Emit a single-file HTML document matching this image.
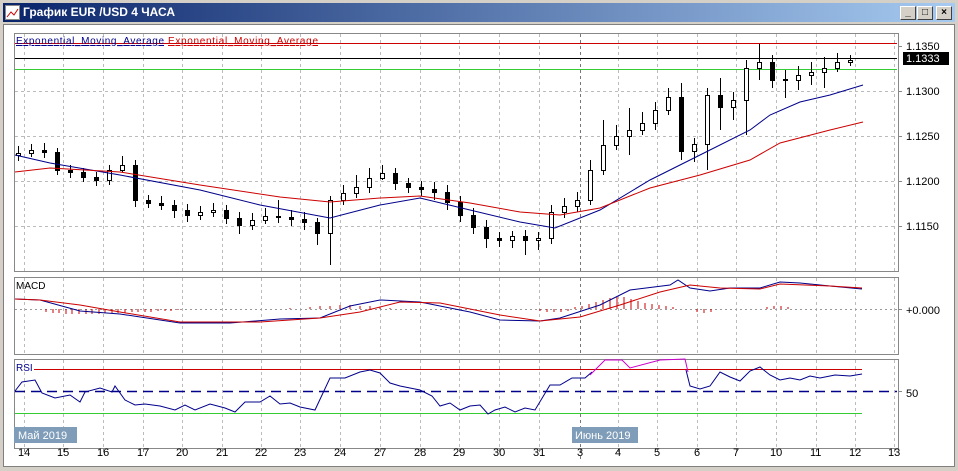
<!DOCTYPE html>
<html><head><meta charset="utf-8"><style>
body{margin:0;width:958px;height:471px;overflow:hidden;background:#d4d0c8;font-family:"Liberation Sans","DejaVu Sans",sans-serif}
#t{position:absolute;left:3px;top:3px;width:952px;height:19px;background:linear-gradient(90deg,#0a246a,#a6caf0)}
#t span{position:absolute;left:20px;top:2px;color:#fff;font:bold 12px "Liberation Sans",sans-serif}
.b{position:absolute;top:3px;width:14px;height:12px;background:#d4d0c8;border:1px solid;border-color:#fff #404040 #404040 #fff;font:bold 10px sans-serif;text-align:center;line-height:12px;color:#000}
#c{position:absolute;left:3px;top:24px;width:950px;height:441px;background:#fff;border:1px solid #808080}
svg{position:absolute;left:0;top:0}
</style></head><body>
<div id="t"><svg width="16" height="16" style="left:2px;top:2px"><rect x="0.5" y="0.5" width="14" height="14" fill="#fff" stroke="#888"/><polyline points="2,12 6,7 9,10 13,4" fill="none" stroke="#c00"/></svg><span>График EUR /USD  4 ЧАСА</span>
<div class="b" style="left:897px">_</div><div class="b" style="left:914px">□</div><div class="b" style="left:933px">×</div></div>
<div id="c"></div>
<svg width="958" height="471" font-family="Liberation Sans, DejaVu Sans, sans-serif" font-size="11">
<g fill="#fff" stroke="#888">
<rect x="14.5" y="33.5" width="884" height="238"/>
<rect x="14.5" y="277.5" width="884" height="77"/>
<rect x="14.5" y="359.5" width="884" height="89"/>
</g>
<g stroke="#bbb" stroke-dasharray="3,3">
<path d="M24.5 34V271M63.5 34V271M103.5 34V271M143.5 34V271M182.5 34V271M222.5 34V271M261.5 34V271M300.5 34V271M340.5 34V271M380.5 34V271M420.5 34V271M459.5 34V271M499.5 34V271M539.5 34V271M618.5 34V271M657.5 34V271M697.5 34V271M736.5 34V271M776.5 34V271M816.5 34V271M855.5 34V271M894.5 34V271"/>
<path d="M24.5 278V354M63.5 278V354M103.5 278V354M143.5 278V354M182.5 278V354M222.5 278V354M261.5 278V354M300.5 278V354M340.5 278V354M380.5 278V354M420.5 278V354M459.5 278V354M499.5 278V354M539.5 278V354M618.5 278V354M657.5 278V354M697.5 278V354M736.5 278V354M776.5 278V354M816.5 278V354M855.5 278V354M894.5 278V354"/>
<path d="M24.5 360V448M63.5 360V448M103.5 360V448M143.5 360V448M182.5 360V448M222.5 360V448M261.5 360V448M300.5 360V448M340.5 360V448M380.5 360V448M420.5 360V448M459.5 360V448M499.5 360V448M539.5 360V448M618.5 360V448M657.5 360V448M697.5 360V448M736.5 360V448M776.5 360V448M816.5 360V448M855.5 360V448M894.5 360V448"/>
<path d="M15 91.5H897M15 136.5H897M15 181.5H897M15 226.5H897"/>
</g>
<path d="M580.5 34V271M580.5 278V354M580.5 360V460" stroke="#777" stroke-dasharray="3,3"/>
<path d="M898 46.5h4M898 91.5h4M898 136.5h4M898 181.5h4M898 226.5h4M898 309.5h4M898 391.5h4M24.5 448v4M63.5 448v4M103.5 448v4M143.5 448v4M182.5 448v4M222.5 448v4M261.5 448v4M300.5 448v4M340.5 448v4M380.5 448v4M420.5 448v4M459.5 448v4M499.5 448v4M539.5 448v4M580.5 448v4M618.5 448v4M657.5 448v4M697.5 448v4M736.5 448v4M776.5 448v4M816.5 448v4M855.5 448v4M894.5 448v4" stroke="#888"/>
<g fill="#000">
<text x="906" y="50">1.1350</text><text x="906" y="95">1.1300</text><text x="906" y="140">1.1250</text><text x="906" y="185">1.1200</text><text x="906" y="230">1.1150</text>
<text x="906" y="314">+0.000</text><text x="906" y="397">50</text>
<text x="18" y="456">14</text><text x="57" y="456">15</text><text x="97" y="456">16</text><text x="137" y="456">17</text><text x="176" y="456">20</text><text x="216" y="456">21</text><text x="255" y="456">22</text><text x="294" y="456">23</text><text x="334" y="456">24</text><text x="374" y="456">27</text><text x="414" y="456">28</text><text x="453" y="456">29</text><text x="493" y="456">30</text><text x="533" y="456">31</text><text x="577" y="456">3</text><text x="615" y="456">4</text><text x="654" y="456">5</text><text x="694" y="456">6</text><text x="733" y="456">7</text><text x="770" y="456">10</text><text x="810" y="456">11</text><text x="849" y="456">12</text><text x="888" y="456">13</text>
</g>
<path d="M15 43.5H897" stroke="#c00"/><path d="M15 58.5H897" stroke="#000"/><path d="M15 69.5H897" stroke="#3c3"/>
<rect x="903" y="52" width="46" height="13" fill="#000"/><text x="906" y="62" fill="#fff">1.1333</text>
<text x="16" y="44" fill="#00008b" font-size="10" textLength="148" text-decoration="underline">Exponential_Moving_Average</text>
<text x="168" y="44" fill="#c00" font-size="10" textLength="150" text-decoration="underline">Exponential_Moving_Average</text>
<path stroke="#000" d="M18.5 146V161M31.5 144V157M44.5 143V158M57.5 148V175M70.5 165V178M83.5 168V182M96.5 172V186M109.5 165V185M122.5 156V172M135.5 160V207M148.5 195V208M161.5 196V210M174.5 200V218M187.5 204V222M200.5 206V220M213.5 203V217M226.5 205V224M239.5 212V234M252.5 213V230M265.5 208V224M278.5 200V223M291.5 210V226M304.5 212V230M317.5 218V245M330.5 196V265M343.5 185V205M356.5 175V198M369.5 168V193M382.5 165V180M395.5 168V190M408.5 178V193M421.5 181V196M434.5 182V200M447.5 185V210M460.5 196V222M473.5 208V234M486.5 220V248M499.5 232V247M512.5 231V248M525.5 230V255M538.5 232V250M551.5 205V244M564.5 198V218M577.5 192V212M590.5 160V205M603.5 120V175M616.5 125V150M629.5 108V155M642.5 112V135M655.5 102V130M668.5 88V115M681.5 83V160M694.5 138V162M707.5 88V170M720.5 78V130M733.5 92V120M746.5 60V135M759.5 44V80M772.5 55V88M785.5 70V98M798.5 66V90M811.5 62V85M824.5 57V88M837.5 53V72M850.5 55V66"/>
<g stroke="#000">
<rect x="16.5" y="153.5" width="4" height="2" fill="#fff"/><rect x="29.5" y="150.5" width="4" height="3" fill="#fff"/><rect x="42.5" y="150.5" width="4" height="2"/><rect x="55.5" y="152.5" width="4" height="18"/><rect x="68.5" y="170.5" width="4" height="2"/><rect x="81.5" y="172.5" width="4" height="5"/><rect x="94.5" y="177.5" width="4" height="3"/><rect x="107.5" y="170.5" width="4" height="10" fill="#fff"/><rect x="120.5" y="165.5" width="4" height="5" fill="#fff"/><rect x="133.5" y="165.5" width="4" height="35"/><rect x="146.5" y="200.5" width="4" height="3"/><rect x="159.5" y="203.5" width="4" height="2"/><rect x="172.5" y="205.5" width="4" height="5"/><rect x="185.5" y="210.5" width="4" height="5"/><rect x="198.5" y="212.5" width="4" height="3" fill="#fff"/><rect x="211.5" y="210.5" width="4" height="2" fill="#fff"/><rect x="224.5" y="210.5" width="4" height="8"/><rect x="237.5" y="218.5" width="4" height="7"/><rect x="250.5" y="220.5" width="4" height="5" fill="#fff"/><rect x="263.5" y="216.5" width="4" height="4" fill="#fff"/><rect x="276.5" y="216.5" width="4" height="1"/><rect x="289.5" y="217.5" width="4" height="2"/><rect x="302.5" y="219.5" width="4" height="3"/><rect x="315.5" y="222.5" width="4" height="11"/><rect x="328.5" y="200.5" width="4" height="33" fill="#fff"/><rect x="341.5" y="193.5" width="4" height="7" fill="#fff"/><rect x="354.5" y="187.5" width="4" height="6" fill="#fff"/><rect x="367.5" y="178.5" width="4" height="9" fill="#fff"/><rect x="380.5" y="173.5" width="4" height="5" fill="#fff"/><rect x="393.5" y="173.5" width="4" height="10"/><rect x="406.5" y="183.5" width="4" height="4"/><rect x="419.5" y="187.5" width="4" height="2"/><rect x="432.5" y="189.5" width="4" height="3"/><rect x="445.5" y="192.5" width="4" height="10"/><rect x="458.5" y="202.5" width="4" height="13"/><rect x="471.5" y="215.5" width="4" height="12"/><rect x="484.5" y="227.5" width="4" height="11"/><rect x="497.5" y="238.5" width="4" height="2"/><rect x="510.5" y="236.5" width="4" height="4" fill="#fff"/><rect x="523.5" y="236.5" width="4" height="4"/><rect x="536.5" y="238.5" width="4" height="2" fill="#fff"/><rect x="549.5" y="212.5" width="4" height="26" fill="#fff"/><rect x="562.5" y="206.5" width="4" height="6" fill="#fff"/><rect x="575.5" y="200.5" width="4" height="6" fill="#fff"/><rect x="588.5" y="170.5" width="4" height="30" fill="#fff"/><rect x="601.5" y="145.5" width="4" height="25" fill="#fff"/><rect x="614.5" y="136.5" width="4" height="9" fill="#fff"/><rect x="627.5" y="130.5" width="4" height="6" fill="#fff"/><rect x="640.5" y="123.5" width="4" height="7" fill="#fff"/><rect x="653.5" y="110.5" width="4" height="13" fill="#fff"/><rect x="666.5" y="97.5" width="4" height="13" fill="#fff"/><rect x="679.5" y="97.5" width="4" height="54"/><rect x="692.5" y="144.5" width="4" height="7" fill="#fff"/><rect x="705.5" y="95.5" width="4" height="49" fill="#fff"/><rect x="718.5" y="95.5" width="4" height="12"/><rect x="731.5" y="100.5" width="4" height="7" fill="#fff"/><rect x="744.5" y="68.5" width="4" height="32" fill="#fff"/><rect x="757.5" y="62.5" width="4" height="6" fill="#fff"/><rect x="770.5" y="62.5" width="4" height="18"/><rect x="783.5" y="79.5" width="4" height="1"/><rect x="796.5" y="75.5" width="4" height="5" fill="#fff"/><rect x="809.5" y="72.5" width="4" height="3" fill="#fff"/><rect x="822.5" y="68.5" width="4" height="4" fill="#fff"/><rect x="835.5" y="62.5" width="4" height="6" fill="#fff"/><rect x="848.5" y="60.5" width="4" height="2" fill="#fff"/>
</g>
<polyline fill="none" stroke="#00008b" points="15,155 50,163 120,175 200,190 260,205 330,218 380,205 420,198 470,210 520,222 555,228 600,210 650,180 700,155 750,130 770,115 800,102 830,95 863,85"/>
<polyline fill="none" stroke="#c00" points="15,172 50,168 120,172 200,185 280,197 330,202 380,198 420,196 470,203 520,212 560,215 600,208 650,188 700,175 750,160 780,143 830,130 863,122"/>
<text x="16" y="289" font-size="10">MACD</text>
<path d="M15 309.5H897" stroke="#999" stroke-dasharray="2,3"/>
<path stroke="#c00" d="M46 309v3M53 309v4M59 309v4M66 309v5M72 309v5M79 309v5M86 309v5M92 309v5M99 309v5M105 309v4M112 309v4M118 309v4M125 309v4M132 309v3M138 309v3M145 309v3M151 309v3M158 309v2M165 309v2M171 309v2M178 309v1M290 309v-1M310 309v-2M320 309v-3M330 309v-3M340 309v-4M350 309v-4M360 309v-3M370 309v-3M380 309v-2M390 309v-1M540 309v2M547 309v3M554 309v3M561 309v3M568 309v2M575 309v-2M582 309v-3M589 309v-5M596 309v-7M603 309v-9M610 309v-11M617 309v-12M624 309v-12M631 309v-10M638 309v-8M645 309v-6M652 309v-5M659 309v-4M666 309v-3M673 309v-2M697 309v3M704 309v4M711 309v3M767 309v-2M774 309v-3M781 309v-3M788 309v-2"/>
<polyline fill="none" stroke="#00008b" points="15,299 40,300 80,311 120,314 180,323 230,323 280,319 320,318 350,306 380,300 420,302 470,312 500,320 540,321 560,318 600,305 630,290 670,285 678,280 690,288 710,291 730,288 760,288 780,282 800,283 830,286 862,289"/>
<polyline fill="none" stroke="#c00" points="15,299 40,300 80,305 120,312 180,322 260,322 320,318 360,312 400,302 440,303 500,315 540,321 580,317 620,305 660,292 690,285 720,288 760,289 780,284 830,286 862,288"/>
<text x="16" y="371" font-size="10" fill="#00008b">RSI</text>
<path d="M34 369.5H862" stroke="#c00"/><path d="M15 391.5H897" stroke="#00008b" stroke-width="1.5" stroke-dasharray="10,6"/><path d="M15 413.5H862" stroke="#3c3"/>
<polyline fill="none" stroke="#00008b" points="15,391 22,382 35,380 42,393 55,398 70,395 80,402 85,392 100,388 112,392 115,386 125,400 135,405 145,404 160,406 175,410 185,405 195,410 210,404 225,408 235,412 245,402 260,402 270,396 280,404 290,403 300,407 315,410 330,378 345,378 360,372 370,370 380,373 390,383 400,386 420,390 432,396 440,406 450,403 460,410 470,406 480,405 488,414 495,410 505,407 515,412 525,408 535,410 550,385 560,385 572,378 585,378 592,372"/>
<polyline fill="none" stroke="#00008b" points="686,370 690,386 700,389 710,386 720,372 730,377 740,381 750,371 760,367 770,375 780,380 790,378 800,380 810,376 820,378 835,375 850,376 862,374"/>
<polyline fill="none" stroke="#c0c" points="590,375 605,360 622,360 630,368 660,360 685,359 688,372"/>
<rect x="14" y="427" width="63" height="16" fill="#7f9db9"/><text x="18" y="439" fill="#fff">Май 2019</text>
<rect x="572" y="427" width="66" height="16" fill="#7f9db9"/><text x="575" y="439" fill="#fff">Июнь 2019</text>
</svg>
</body></html>
